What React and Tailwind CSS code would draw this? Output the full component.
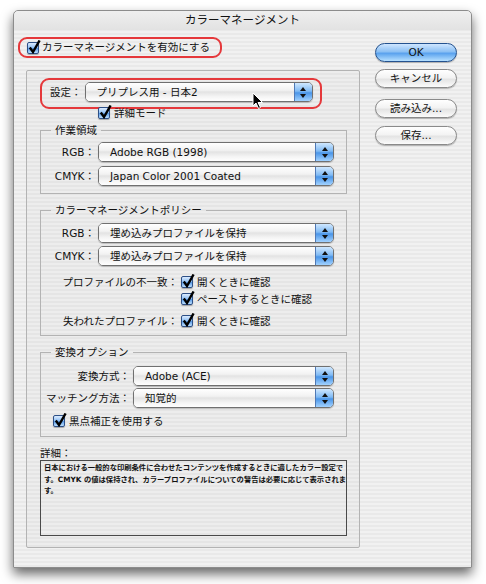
import React from 'react';

// Aqua pinstripe background
const stripes =
  'bg-[repeating-linear-gradient(180deg,#f1f1f1_0px,#f1f1f1_2px,#e9e9e9_2px,#e9e9e9_4px)]';

function Check() {
  return (
    <span className="relative inline-block h-[12px] w-[12px] shrink-0 rounded-[2px] border border-[#2d4f86] bg-[linear-gradient(180deg,#dcecff_0%,#94c2f5_45%,#5b9be6_55%,#bde0ff_100%)] shadow-[0_1px_1px_rgba(0,0,0,0.3)]">
      <svg className="absolute left-[0px] top-[-3px]" width="13" height="14" viewBox="0 0 13 14">
        <path d="M2.5 8.5 L5 12 L11 1.5" fill="none" stroke="#000" strokeWidth="2.4" strokeLinecap="square" />
      </svg>
    </span>
  );
}

function Popup({ value, width }) {
  return (
    <div className={`flex h-[20px] ${width} overflow-hidden rounded-[5px] border border-[#707070] shadow-[0_1px_1px_rgba(0,0,0,0.2)]`}>
      <div className="flex flex-1 items-center bg-[linear-gradient(180deg,#ffffff_0%,#f2f2f2_40%,#e3e3e3_50%,#f4f4f4_75%,#ffffff_100%)] pl-[11px] leading-none">
        {value}
      </div>
      <div className="flex w-[18px] items-center justify-center border-l border-[#4f79b5] bg-[linear-gradient(180deg,#d0e8ff_0%,#80baf4_45%,#4a95e8_55%,#a2d2ff_100%)]">
        <svg width="6" height="13" viewBox="0 0 6 13">
          <path d="M3 1 L6 5 L0 5Z M0 8 L6 8 L3 12Z" fill="#111" />
        </svg>
      </div>
    </div>
  );
}

function Btn({ children, primary, className }) {
  const look = primary
    ? 'border-[#24528f] bg-[linear-gradient(180deg,#cfe6ff_0%,#8cc0f4_45%,#5aa2ee_55%,#b6e0ff_100%)]'
    : 'border-[#8a8a8a] bg-[linear-gradient(180deg,#ffffff_0%,#f3f3f3_45%,#e4e4e4_55%,#fbfbfb_100%)]';
  return (
    <div className={`flex h-[19px] w-[82px] items-center justify-center rounded-full border ${look} shadow-[0_1px_1px_rgba(0,0,0,0.25)] leading-none ${className}`}>
      {children}
    </div>
  );
}

function Row({ label, labelW, children }) {
  return (
    <div className="flex items-center">
      <div className={`${labelW} mr-[3px] text-right leading-none`}>{label}</div>
      {children}
    </div>
  );
}

function Group({ title, className, children }) {
  return (
    <fieldset className={`w-[307px] border border-[#b3b3b3] ${className}`}>
      <legend className="ml-[10px] px-[4px] leading-[13px]">{title}</legend>
      {children}
    </fieldset>
  );
}

export default function App() {
  return (
    <div className="min-h-[584px] w-[486px] bg-white pl-[13px] pt-[10px] font-['DejaVu_Sans','Noto_Sans_CJK_JP',sans-serif] text-[10.5px] text-[#111]">
      <div className={`relative h-[558px] w-[459px] rounded-t-[5px] border border-[#8c8c8c] ${stripes} shadow-[0_6px_12px_rgba(0,0,0,0.6)]`}>
        {/* title bar */}
        <div className="flex h-[19px] items-center justify-center rounded-t-[5px] bg-[linear-gradient(180deg,#efefef_0%,#e2e2e2_100%)] text-[11.5px] leading-none">
          カラーマネージメント
        </div>

        <div className="flex">
          {/* left column */}
          <div className="pl-[4px] pt-[7px]">
            <div className="flex h-[21px] w-[204px] items-center gap-[3px] rounded-[9px] border-2 border-[#e5383b] pl-[7px]">
              <Check />
              <span className="leading-none">カラーマネージメントを有効にする</span>
            </div>

            <div className="ml-[8px] mt-[12px] h-[478px] w-[334px] rounded-[2px] border border-[#b3b3b3] bg-[rgba(0,0,0,0.015)] pl-[13px] pt-[7px]">
              {/* preset */}
              <div className="flex h-[31px] w-[282px] items-start rounded-[9px] border-2 border-[#e5383b] pl-[8px] pt-[2px]">
                <span className="mt-[5px] leading-none">設定：</span>
                <div className="ml-[3px]">
                  <Popup value="プリプレス用 - 日本2" width="w-[228px]" />
                </div>
              </div>
              <div className="relative -mt-[2px] flex items-center gap-[4px] pl-[58px]">
                <Check />
                <span className="leading-none">詳細モード</span>
              </div>

              {/* working spaces */}
              <Group title="作業領域" className="mt-[5px] pb-[7px] pt-[5px]">
                <div className="flex flex-col gap-[4px]">
                  <Row label="RGB：" labelW="w-[54px]">
                    <Popup value="Adobe RGB (1998)" width="w-[236px]" />
                  </Row>
                  <Row label="CMYK：" labelW="w-[54px]">
                    <Popup value="Japan Color 2001 Coated" width="w-[236px]" />
                  </Row>
                </div>
              </Group>

              {/* policies */}
              <Group title="カラーマネージメントポリシー" className="mt-[10px] pb-[8px] pt-[6px]">
                <div className="flex flex-col gap-[3px]">
                  <Row label="RGB：" labelW="w-[54px]">
                    <Popup value="埋め込みプロファイルを保持" width="w-[236px]" />
                  </Row>
                  <Row label="CMYK：" labelW="w-[54px]">
                    <Popup value="埋め込みプロファイルを保持" width="w-[236px]" />
                  </Row>
                </div>
                <div className="mt-[10px] flex flex-col">
                  <Row label="プロファイルの不一致：" labelW="w-[137px]">
                    <Check />
                    <span className="ml-[4px] leading-none">開くときに確認</span>
                  </Row>
                  <Row label="" labelW="w-[137px] mt-[5px]">
                    <div className="mt-[5px] flex items-center">
                      <Check />
                      <span className="ml-[4px] leading-none">ペーストするときに確認</span>
                    </div>
                  </Row>
                  <div className="mt-[10px]">
                    <Row label="失われたプロファイル：" labelW="w-[137px]">
                      <Check />
                      <span className="ml-[4px] leading-none">開くときに確認</span>
                    </Row>
                  </div>
                </div>
              </Group>

              {/* conversion */}
              <Group title="変換オプション" className="mt-[10px] pb-[9px] pt-[7px]">
                <div className="flex flex-col gap-[2px]">
                  <Row label="変換方式：" labelW="w-[89px]">
                    <Popup value="Adobe (ACE)" width="w-[201px]" />
                  </Row>
                  <Row label="マッチング方法：" labelW="w-[89px]">
                    <Popup value="知覚的" width="w-[201px]" />
                  </Row>
                </div>
                <div className="mt-[7px] flex items-center gap-[4px] pl-[12px]">
                  <Check />
                  <span className="leading-none">黒点補正を使用する</span>
                </div>
              </Group>

              {/* description */}
              <div className="mt-[10px] leading-[13px]">詳細：</div>
              <div className="h-[76px] w-[307px] border border-[#4a4a4a] pl-[3px] pt-[1px] text-[7.3px] font-bold leading-[11.5px] whitespace-nowrap">
                日本における一般的な印刷条件に合わせたコンテンツを作成するときに適したカラー設定で
                <br />
                す。CMYK の値は保持され、カラープロファイルについての警告は必要に応じて表示されま
                <br />
                す。
              </div>
            </div>
          </div>

          {/* right column */}
          <div className="ml-[15px] flex flex-col pt-[13px]">
            <Btn primary>OK</Btn>
            <Btn className="mt-[7px]">キャンセル</Btn>
            <Btn className="mt-[11px]">読み込み...</Btn>
            <Btn className="mt-[8px]">保存...</Btn>
          </div>
        </div>

        {/* mouse pointer */}
        <svg className="absolute left-[238px] top-[81px]" width="12" height="18" viewBox="0 0 12 18">
          <path d="M1 1 L1 14 L4 11 L6.5 16.5 L8.5 15.5 L6 10.5 L10.5 10.5 Z" fill="#000" stroke="#fff" strokeWidth="1" strokeLinejoin="round" />
        </svg>
      </div>
    </div>
  );
}
